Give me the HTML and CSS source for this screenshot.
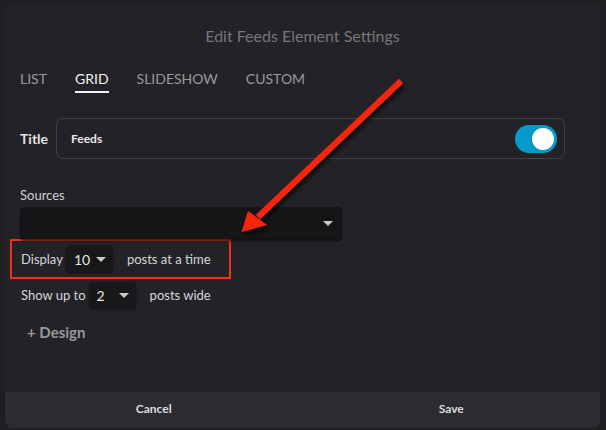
FILE: index.html
```html
<!DOCTYPE html>
<html>
<head>
<meta charset="utf-8">
<link rel="stylesheet" href="styles.css">
</head>
<body>
<div class="dialog">
  <div class="main">
    <h1 class="heading">Edit Feeds Element Settings</h1>
    <div class="tabs">
      <span class="tab">LIST</span>
      <span class="tab active">GRID</span>
      <span class="tab">SLIDESHOW</span>
      <span class="tab">CUSTOM</span>
    </div>
    <div class="title-row">
      <span class="label-strong">Title</span>
      <div class="title-box">
        <span class="title-value">Feeds</span>
        <span class="toggle"><span class="knob"></span></span>
      </div>
    </div>
    <div class="field-label">Sources</div>
    <div class="select-wide"><span class="caret"></span></div>
    <div class="highlight">
      <div class="inline-row">
        <span class="text">Display</span>
        <span class="select-small"><span class="val">10</span><span class="caret"></span></span>
        <span class="text after">posts at a time</span>
      </div>
    </div>
    <div class="inline-row plain">
      <span class="text">Show up to</span>
      <span class="select-small"><span class="val">2</span><span class="caret"></span></span>
      <span class="text after">posts wide</span>
    </div>
    <div class="design">+ Design</div>
  </div>
  <div class="footer">
    <button class="btn">Cancel</button>
    <button class="btn">Save</button>
  </div>
</div>
<svg class="arrow" width="606" height="430" viewBox="0 0 606 430">
  <defs>
    <filter id="sh" x="-20%" y="-20%" width="140%" height="140%">
      <feDropShadow dx="2" dy="3" stdDeviation="2" flood-color="#000" flood-opacity="0.8"/>
    </filter>
  </defs>
  <g filter="url(#sh)">
    <line x1="401" y1="81" x2="258" y2="217" stroke="#f5280b" stroke-width="6" stroke-linecap="butt"/>
    <polygon points="241.5,232 248,211 267,225" fill="#f5280b"/>
  </g>
</svg>
</body>
</html>
```

FILE: styles.css
```css
html, body {
  margin: 0;
  padding: 0;
}
body {
  width: 606px;
  height: 430px;
  background: #1f1f22;
  font-family: Lato, "Open Sans", sans-serif;
  position: relative;
  overflow: hidden;
}
.dialog {
  position: absolute;
  left: 5px;
  top: 3px;
  width: 595px;
  height: 425px;
  border-radius: 8px;
  overflow: hidden;
  background: #232327;
  display: flex;
  flex-direction: column;
}
.main {
  flex: 1;
  padding: 23px 15px 0 15px;
  box-sizing: border-box;
}
.heading {
  margin: 0;
  font-size: 16px;
  line-height: 20px;
  font-weight: 400;
  color: #77767a;
  text-align: center;
}
.tabs {
  display: flex;
  gap: 28px;
  margin-top: 24px;
}
.tab {
  font-size: 14px;
  line-height: 18px;
  color: #9a999d;
  padding-bottom: 3px;
  border-bottom: 2px solid transparent;
}
.tab.active {
  color: #f2f2f2;
  border-bottom-color: #f2f2f2;
}
.title-row {
  display: flex;
  align-items: center;
  margin-top: 25px;
}
.label-strong {
  font-size: 14px;
  font-weight: 700;
  color: #e2e2e4;
  width: 36px;
}
.title-box {
  flex: 0 0 auto;
  width: 509px;
  height: 41px;
  box-sizing: border-box;
  border: 1px solid #414145;
  border-radius: 7px;
  display: flex;
  align-items: center;
  justify-content: space-between;
  padding: 0 7px 0 14px;
}
.title-value {
  font-size: 12px;
  font-weight: 700;
  color: #e8e8ea;
}
.toggle {
  width: 42px;
  height: 28px;
  border-radius: 14px;
  background: #0799c9;
  position: relative;
}
.knob {
  position: absolute;
  right: 3px;
  top: 3px;
  width: 22px;
  height: 22px;
  border-radius: 50%;
  background: #ffffff;
}
.field-label {
  margin-top: 28px;
  font-size: 13px;
  line-height: 16px;
  color: #cfcfd2;
}
.select-wide {
  margin-top: 4px;
  width: 322px;
  height: 32px;
  background: #151518;
  border-radius: 4px;
  box-shadow: 0 2px 2px rgba(0, 0, 0, 0.6);
  position: relative;
}
.caret {
  width: 0;
  height: 0;
  border-left: 5px solid transparent;
  border-right: 5px solid transparent;
  border-top: 5px solid #c9c9cc;
}
.select-wide .caret {
  position: absolute;
  right: 9px;
  top: 14px;
}
.highlight {
  margin-left: -10px;
  width: 221px;
  height: 40px;
  box-sizing: border-box;
  border: 2px solid #f0301a;
  padding-left: 9px;
  display: flex;
  align-items: center;
}
.inline-row {
  display: flex;
  align-items: center;
  height: 26px;
}
.inline-row.plain {
  margin-top: 3px;
  padding-left: 1px;
}
.text {
  font-size: 13px;
  color: #d6d6d9;
}
.text.after {
  margin-left: 14px;
}
.select-small {
  margin-left: 3px;
  width: 47px;
  height: 26px;
  box-sizing: border-box;
  background: #18181b;
  border-radius: 4px;
  box-shadow: 0 1px 2px rgba(0, 0, 0, 0.6);
  display: flex;
  align-items: center;
  justify-content: space-between;
  padding: 0 7px 0 8px;
}
.val {
  font-size: 14px;
  color: #e6e6e8;
}
.design {
  margin-top: 15px;
  padding-left: 7px;
  font-size: 15px;
  line-height: 18px;
  font-weight: 700;
  color: #98979b;
}
.footer {
  height: 36px;
  background: #2d2d31;
  display: flex;
}
.btn {
  flex: 1;
  background: none;
  border: none;
  font-family: Lato, "Open Sans", sans-serif;
  font-size: 12px;
  font-weight: 700;
  color: #dcdcde;
  padding: 0 0 4px 0;
}
.arrow {
  position: absolute;
  left: 0;
  top: 0;
  pointer-events: none;
}
```
